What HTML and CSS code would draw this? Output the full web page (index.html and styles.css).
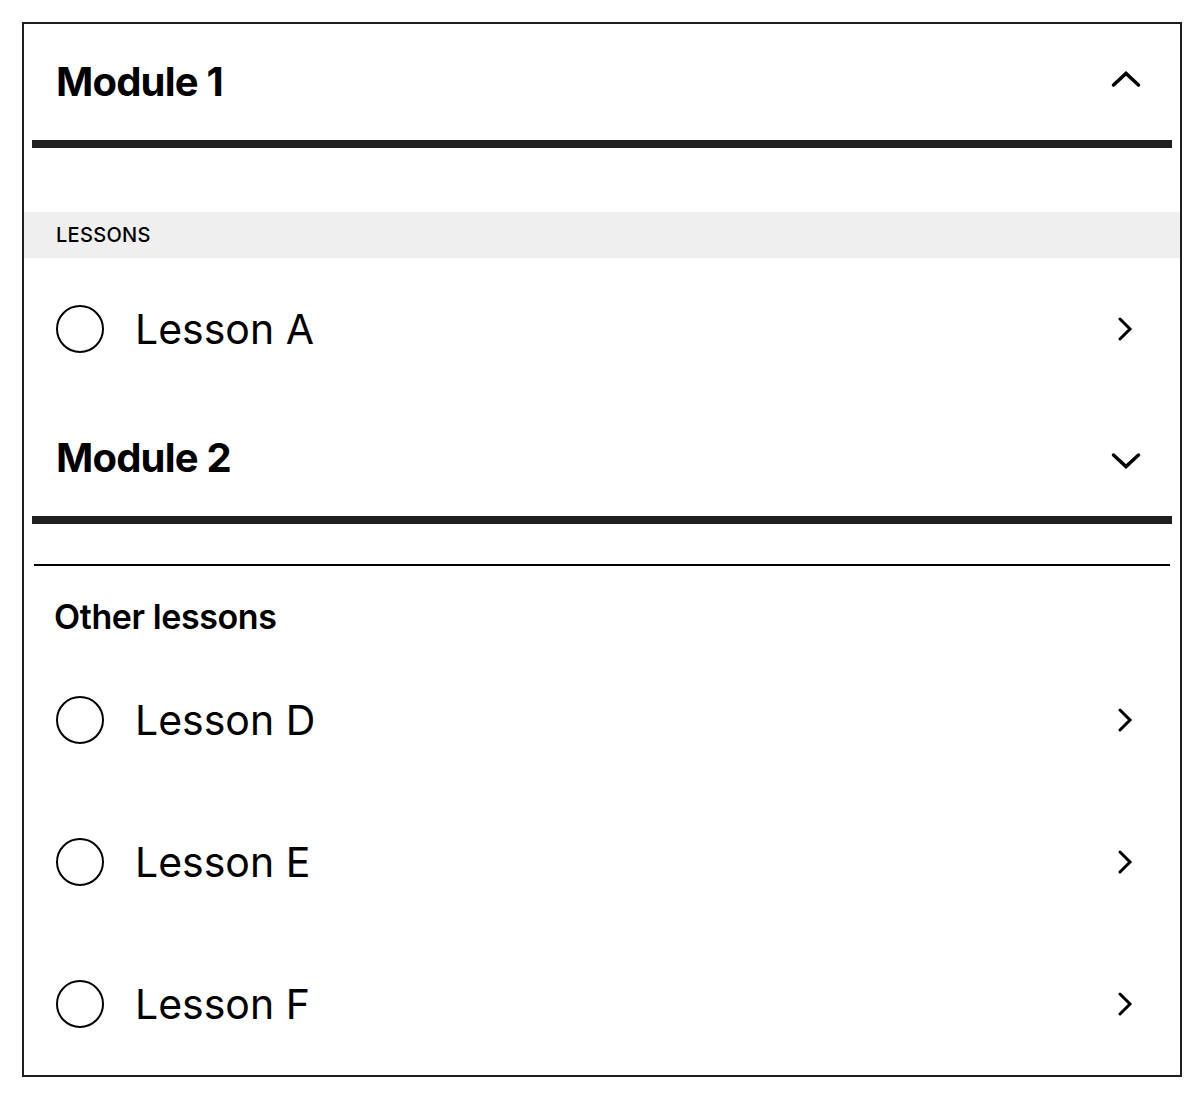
FILE: index.html
```html
<!DOCTYPE html>
<html lang="en">
<head>
    <meta charset="UTF-8">
    <meta name="viewport" content="width=device-width, initial-scale=1.0">
    <title>Course modules</title>
    <link rel="stylesheet" href="styles.css">
</head>
<body>
    <div class="panel">
        <section class="module">
            <div class="module-header">
                <h2 class="module-title">Module 1</h2>
                <svg class="toggle" width="32" height="32" viewBox="0 0 32 32">
                    <polyline points="3.5,19 16,7.5 28.5,19" />
                </svg>
            </div>
            <div class="module-rule"></div>

            <div class="module-body">
                <div class="group-label">LESSONS</div>
                <div class="lesson">
                    <span class="lesson-check"></span>
                    <span class="lesson-name">Lesson A</span>
                    <svg class="lesson-arrow" width="24" height="24" viewBox="0 0 24 24">
                        <polyline points="7,2 17,12 7,22" />
                    </svg>
                </div>
            </div>
        </section>

        <section class="module">
            <div class="module-header">
                <h2 class="module-title">Module 2</h2>
                <svg class="toggle" width="32" height="32" viewBox="0 0 32 32">
                    <polyline points="3.5,13 16,24.5 28.5,13" />
                </svg>
            </div>
            <div class="module-rule"></div>
        </section>

        <section class="other">
            <h3 class="other-title">Other lessons</h3>
            <div class="lesson">
                <span class="lesson-check"></span>
                <span class="lesson-name">Lesson D</span>
                <svg class="lesson-arrow" width="24" height="24" viewBox="0 0 24 24">
                    <polyline points="7,2 17,12 7,22" />
                </svg>
            </div>
            <div class="lesson">
                <span class="lesson-check"></span>
                <span class="lesson-name">Lesson E</span>
                <svg class="lesson-arrow" width="24" height="24" viewBox="0 0 24 24">
                    <polyline points="7,2 17,12 7,22" />
                </svg>
            </div>
            <div class="lesson">
                <span class="lesson-check"></span>
                <span class="lesson-name">Lesson F</span>
                <svg class="lesson-arrow" width="24" height="24" viewBox="0 0 24 24">
                    <polyline points="7,2 17,12 7,22" />
                </svg>
            </div>
        </section>
    </div>
</body>
</html>
```

FILE: styles.css
```css
* {
    box-sizing: border-box;
}

body {
    margin: 0;
    padding: 22px 16px 20px 22px;
    background-color: #fff;
    color: #000;
    font-family: Inter, "Noto Sans", Arial, sans-serif;
}

.panel {
    width: 1160px;
    border: 2px solid #1d1f21;
}

.module-header {
    display: flex;
    align-items: center;
    justify-content: space-between;
    height: 116px;
    padding: 0 38px 0 32px;
}

.module-title {
    margin: 0;
    font-size: 40px;
    font-weight: 700;
    letter-spacing: -0.8px;
    line-height: 50px;
}

.toggle polyline {
    fill: none;
    stroke: #000;
    stroke-width: 3.5;
    stroke-linecap: round;
    stroke-linejoin: miter;
}

.module-rule {
    height: 8px;
    margin: 0 8px;
    background-color: #1d1f21;
}

.module-body {
    padding-top: 64px;
}

.group-label {
    display: flex;
    align-items: center;
    height: 46px;
    padding-left: 32px;
    background-color: #efefef;
    font-size: 20px;
    font-weight: 500;
    letter-spacing: 0.3px;
}

.lesson {
    display: flex;
    align-items: center;
    gap: 32px;
    height: 142px;
    padding: 0 43px 0 32px;
}

.lesson-check {
    width: 48px;
    height: 48px;
    border: 2px solid #000;
    border-radius: 50%;
    flex-shrink: 0;
}

.lesson-name {
    flex: 1;
    margin-left: -1px;
    font-size: 41px;
    font-weight: 400;
    line-height: 50px;
}

.lesson-arrow polyline {
    fill: none;
    stroke: #000;
    stroke-width: 3;
    stroke-linecap: round;
}

.other {
    margin-top: 40px;
    border-top: 2px solid #000;
    margin-left: 10px;
    margin-right: 10px;
}

.other-title {
    margin: 0;
    padding: 31px 0 12px 20px;
    font-size: 34px;
    font-weight: 600;
    letter-spacing: -0.4px;
    line-height: 40px;
}

.other .lesson {
    margin: 0 -10px;
}
```
